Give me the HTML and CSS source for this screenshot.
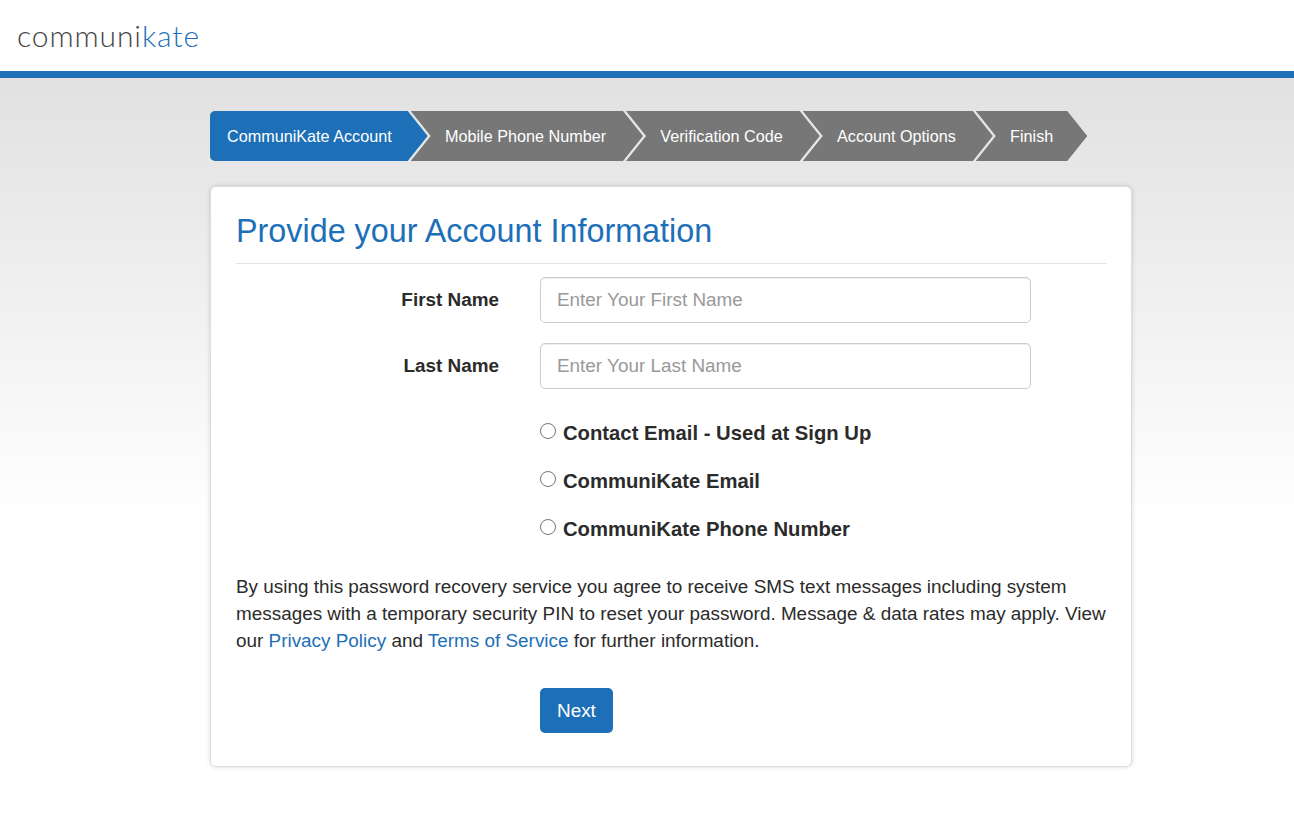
FILE: index.html
```html
<!DOCTYPE html>
<html lang="en">
<head>
    <meta charset="UTF-8">
    <meta name="viewport" content="width=device-width, initial-scale=1.0">
    <title>CommuniKate - Account Information</title>
    <link rel="stylesheet" href="styles.css">
</head>
<body>

<header class="site-header">
    <a class="logo" href="#">communi<span class="logo-accent">kate</span></a>
</header>

<main class="page">
    <ol class="steps">
        <li class="step step-active">CommuniKate Account</li>
        <li class="step">Mobile Phone Number</li>
        <li class="step">Verification Code</li>
        <li class="step">Account Options</li>
        <li class="step">Finish</li>
    </ol>

    <section class="card">
        <h1 class="card-title">Provide your Account Information</h1>

        <form>
            <div class="form-row">
                <label class="form-label" for="firstName">First Name</label>
                <input class="form-input" type="text" id="firstName" placeholder="Enter Your First Name">
            </div>
            <div class="form-row">
                <label class="form-label" for="lastName">Last Name</label>
                <input class="form-input" type="text" id="lastName" placeholder="Enter Your Last Name">
            </div>

            <div class="radio-group">
                <label class="radio"><input type="radio" name="recovery"> Contact Email - Used at Sign Up</label>
                <label class="radio"><input type="radio" name="recovery"> CommuniKate Email</label>
                <label class="radio"><input type="radio" name="recovery"> CommuniKate Phone Number</label>
            </div>

            <p class="notice">By using this password recovery service you agree to receive SMS text messages including system messages with a temporary security PIN to reset your password. Message &amp; data rates may apply. View our <a href="#">Privacy Policy</a> and <a href="#">Terms of Service</a> for further information.</p>

            <div class="form-actions">
                <button class="btn" type="button">Next</button>
            </div>
        </form>
    </section>
</main>

</body>
</html>
```

FILE: styles.css
```css
* {
    box-sizing: border-box;
}
body {
    font-family: "Liberation Sans", Arial, sans-serif;
    margin: 0;
    color: #2b2b2b;
    background-color: #fff;
}
.site-header {
    height: 78px;
    padding: 13px 0 0 17px;
    background-color: #fff;
    border-bottom: 7px solid #1d6fb8;
}
.logo {
    font-family: "Lato", sans-serif;
    font-weight: 300;
    font-size: 30px;
    line-height: 44px;
    letter-spacing: 0.9px;
    color: #444;
    text-decoration: none;
}
.logo-accent {
    color: #1d6fb8;
}
.page {
    height: 737px;
    padding: 33px 0 0 210px;
    background: linear-gradient(#e1e1e1, #fff 60%);
}

/* Step bar */
.steps {
    display: flex;
    margin: 0 0 25px;
    padding: 0;
    list-style: none;
}
.step {
    height: 50px;
    margin-right: -17px;
    padding: 0 37px 0 34.3px;
    font-size: 16.2px;
    line-height: 51px;
    color: #fff;
    background-color: #777;
    clip-path: polygon(0 0, calc(100% - 20px) 0, 100% 50%, calc(100% - 20px) 100%, 0 100%, 20px 50%);
}
.step:last-child {
    padding-right: 34px;
}
.step-active {
    padding-left: 17px;
    padding-right: 36px;
    background-color: #1d6fb8;
    border-radius: 5px 0 0 5px;
    clip-path: polygon(0 0, calc(100% - 20px) 0, 100% 50%, calc(100% - 20px) 100%, 0 100%);
}

/* Card */
.card {
    width: 922px;
    height: 581px;
    padding: 25px 24px 25px 25px;
    background-color: #fff;
    border: 1px solid #ddd;
    border-radius: 6px;
    box-shadow: 0 0 5px rgba(0, 0, 0, 0.15);
}
.card-title {
    margin: 0 0 13px;
    padding-bottom: 13px;
    font-size: 32.35px;
    font-weight: normal;
    line-height: 38px;
    color: #1d6fb8;
    border-bottom: 1px solid #e5e5e5;
}

/* Form */
.form-row {
    display: grid;
    grid-template-columns: 263px 491px;
    column-gap: 41px;
    align-items: center;
    margin-bottom: 20px;
}
.form-label {
    font-size: 18.9px;
    font-weight: bold;
    text-align: right;
}
.form-input {
    width: 100%;
    height: 46px;
    padding: 0 16px;
    font-family: inherit;
    font-size: 18.9px;
    color: #2b2b2b;
    border: 1px solid #ccc;
    border-radius: 5px;
    box-shadow: inset 0 1px 1px rgba(0, 0, 0, 0.075);
}
.form-input::placeholder {
    color: #999;
    opacity: 1;
}
.radio-group {
    margin: 0 0 20px 304px;
}
.radio {
    display: flex;
    align-items: center;
    gap: 7px;
    height: 48px;
    font-size: 20.25px;
    font-weight: bold;
}
.radio input {
    width: 16px;
    height: 16px;
    margin: 0 0 4px;
}
.notice {
    margin: 0;
    font-size: 18.9px;
    line-height: 27px;
}
.notice a {
    color: #1d6fb8;
    text-decoration: none;
}
.form-actions {
    margin: 34px 0 0 304px;
}
.btn {
    height: 45px;
    padding: 0 17px;
    font-family: inherit;
    font-size: 18.9px;
    color: #fff;
    background-color: #1d6fb8;
    border: none;
    border-radius: 5px;
    cursor: pointer;
}
```
